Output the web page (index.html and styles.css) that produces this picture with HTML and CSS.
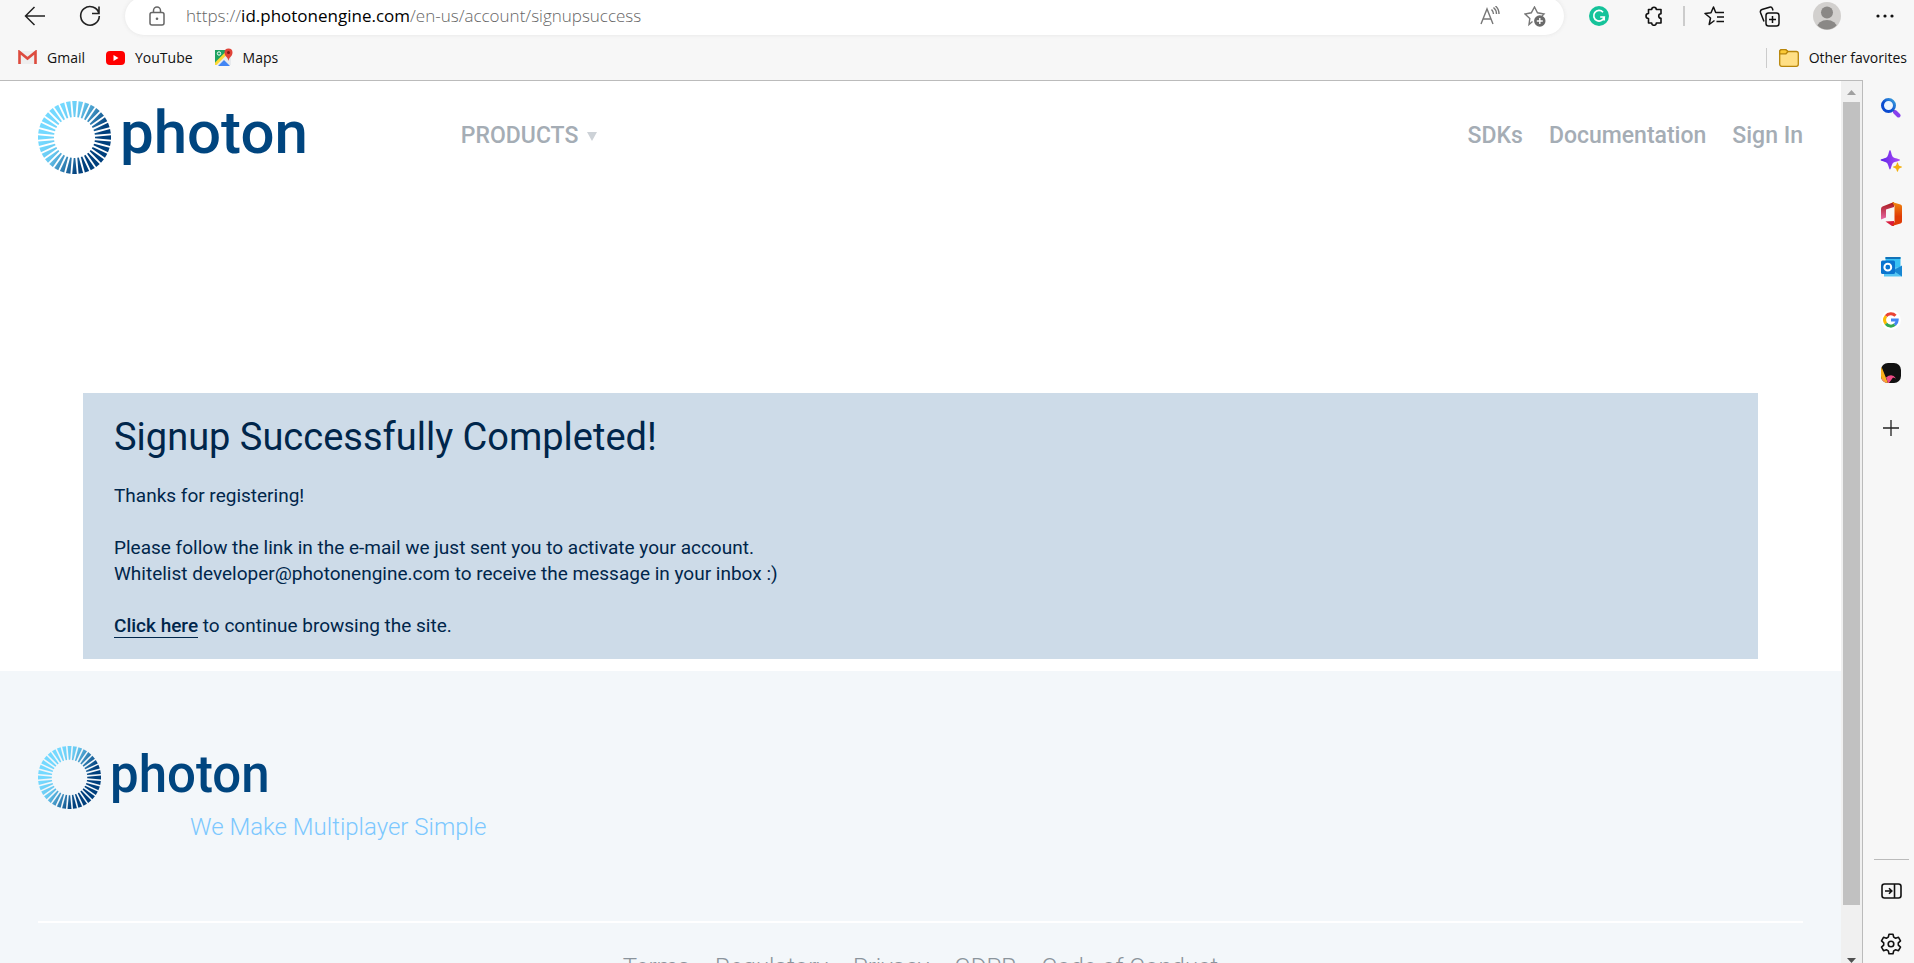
FILE: index.html
```html
<!DOCTYPE html>
<html lang="en">
<head>
<meta charset="utf-8">
<title>Signup Successfully Completed!</title>
<link rel="stylesheet" href="styles.css">
</head>
<body>
<svg class="defs" width="0" height="0" aria-hidden="true">
  <defs>
    <linearGradient id="ringFill" gradientUnits="userSpaceOnUse" x1="14" y1="24" x2="60" y2="52">
      <stop offset="0" stop-color="#74d9ff"/><stop offset=".3" stop-color="#68c8f0"/><stop offset=".85" stop-color="#003f7c"/><stop offset="1" stop-color="#003f7c"/>
    </linearGradient>
    <path id="ray" d="M34.200 0h4.600L37.300 16h-1.600z" fill="#fff"/>
    <g id="rays3"><use href="#ray"/><use href="#ray" transform="rotate(10 36.5 36.5)"/><use href="#ray" transform="rotate(20 36.5 36.5)"/></g>
    <g id="rays9"><use href="#rays3"/><use href="#rays3" transform="rotate(30 36.5 36.5)"/><use href="#rays3" transform="rotate(60 36.5 36.5)"/></g>
    <mask id="rays" maskUnits="userSpaceOnUse" x="0" y="0" width="73" height="73"><use href="#rays9"/><use href="#rays9" transform="rotate(90 36.5 36.5)"/><use href="#rays9" transform="rotate(180 36.5 36.5)"/><use href="#rays9" transform="rotate(270 36.5 36.5)"/></mask>
    <symbol id="ring" viewBox="0 0 73 73"><rect width="73" height="73" fill="url(#ringFill)" mask="url(#rays)"/></symbol>
  </defs>
</svg>
<div class="browser">
  <header class="chrome">
    <div class="toolbar">
      <button class="tool tool-nav" aria-label="Back"><svg width="22" height="20" viewBox="0 0 22 20" fill="none" stroke="#222" stroke-width="1.500"><path d="M21 10H1.500M10.500 1 1.500 10l9 9"/></svg></button>
      <button class="tool tool-nav" aria-label="Refresh"><svg width="22" height="22" viewBox="0 0 22 22" fill="none" stroke="#222" stroke-width="1.600"><path d="M20 8.500A9.300 9.300 0 1 0 20.300 11M20 1.500v7h-7"/></svg></button>
      <div class="address">
        <svg width="16" height="20" viewBox="0 0 16 20" fill="none" stroke="#666" stroke-width="1.500"><rect x="1" y="6.500" width="14" height="12.500" rx="2"/><path d="M4.500 6.500V4.500a3.500 3.500 0 0 1 7 0v2"/><circle cx="8" cy="12.800" r="1.300" fill="#666" stroke="none"/></svg>
        <a class="url" href="#">https://<span class="host">id.photonengine.com</span>/en-us/account/signupsuccess</a>
        <button class="pill-tool" aria-label="Read aloud"><svg width="20" height="20" viewBox="0 0 20 20" fill="none" stroke="#777" stroke-width="1.400"><path d="M1 18 7 3l6 15M3 13h8M11.500 3.500q2 2 2 4.500M13.500 1.500q3 2.500 3 6.500M15.500 0Q19 3 19 8"/></svg></button>
        <button class="pill-tool" aria-label="Add to favorites"><svg width="22" height="21" viewBox="0 0 22 21" fill="none" stroke="#777" stroke-width="1.400"><path d="M8.500 15.500 5 18.500l.8-6L1 8l6.300-1.200L10.500 1l3 5.800L20 8l-2 2"/><circle cx="15.800" cy="15" r="5.700" fill="#6a6a6a" stroke="none"/><path d="M15.800 12v6M12.800 15h6" stroke="#fff"/></svg></button>
      </div>
      <button class="tool" aria-label="Grammarly"><svg width="20" height="20" viewBox="0 0 20 20"><circle cx="10" cy="10" r="10" fill="#15c39a"/><path d="M14 6.200A5.300 5.300 0 1 0 15.200 11h-4M15.200 11v3.600" fill="none" stroke="#fff" stroke-width="1.700"/></svg></button>
      <button class="tool" aria-label="Extensions"><svg width="20" height="20" viewBox="0 0 20 20" fill="none" stroke="#111" stroke-width="1.600" stroke-linejoin="round"><path d="M4.500 3.500h3.200a2.300 2.300 0 0 1 4.600 0H17v4.200a2.300 2.300 0 0 0 0 4.600V17h-4.700a2.300 2.300 0 0 1-4.600 0H4.500v-4.500a2.500 2.500 0 1 1 0-5z"/></svg></button>
      <span class="tool-sep"></span>
      <button class="tool" aria-label="Favorites"><svg width="21" height="20" viewBox="0 0 21 20" fill="none" stroke="#111" stroke-width="1.500" stroke-linejoin="round"><path d="m10.500 14.500-5.300 4 1.300-6.500L1 7.500l6-.7L9.500 1l2.200 5.500H20M13 11h7M12.500 15.500H20"/></svg></button>
      <button class="tool" aria-label="Collections"><svg width="21" height="21" viewBox="0 0 21 21" fill="none" stroke="#111" stroke-width="1.500"><rect x="7" y="7" width="13" height="13" rx="2.500"/><path d="M13.500 10v7M10 13.500h7M5 15.500 1.500 6.500a2.500 2.500 0 0 1 1.500-3l7.500-2.300a2.500 2.500 0 0 1 3 1.500l.5 1.800"/></svg></button>
      <button class="tool tool-profile" aria-label="Profile"><svg width="28" height="28" viewBox="0 0 28 28"><clipPath id="face"><circle cx="14" cy="14" r="13.500"/></clipPath><circle cx="14" cy="14" r="14" fill="#d2d0ce"/><g fill="#8a8886" clip-path="url(#face)"><circle cx="14" cy="10.500" r="6"/><ellipse cx="14" cy="25.500" rx="10" ry="7.500"/></g></svg></button>
      <button class="tool" aria-label="Settings and more"><svg width="18" height="4" viewBox="0 0 18 4" fill="#111"><circle cx="2" cy="2" r="1.600"/><circle cx="9" cy="2" r="1.600"/><circle cx="16" cy="2" r="1.600"/></svg></button>
    </div>
    <nav class="bookmarks" aria-label="Bookmarks">
      <a href="#"><svg width="19" height="15" viewBox="0 0 19 15"><path d="M1 1h17v13H1z" fill="#eee"/><path d="M1.500 14V2l8 6.500 8-6.500v12" fill="none" stroke="#dd4b3e" stroke-width="2.600"/></svg>Gmail</a>
      <a href="#"><svg width="19" height="14" viewBox="0 0 19 14"><rect width="19" height="14" rx="4" fill="#f00"/><path d="m7.500 4 5 3-5 3z" fill="#fff"/></svg>YouTube</a>
      <a href="#"><svg width="19" height="19" viewBox="0 0 19 19"><path d="M1 2h16v15H1z" fill="#1da261"/><path d="M1 17 13 5l4 3v9z" fill="#e8eaed"/><path d="M1 14.500 12.500 3l2 2L2.500 17H1z" fill="#fdd835"/><path d="m4 18 6-6 6 6z" fill="#4285f4"/><circle cx="5" cy="5.500" r="1.700" fill="none" stroke="#fff"/><path d="M14.500 13c-.5-4-4-4.500-4-8.500a4 4 0 0 1 8 0c0 4-3.500 4.500-4 8.500z" fill="#e04338"/><circle cx="14.500" cy="4.500" r="1.500" fill="#801a14"/></svg>Maps</a>
      <a class="other" href="#"><svg width="20" height="18" viewBox="0 0 20 18" stroke="#b8860b" stroke-width="1.300"><path d="M.7 4V2.700a2 2 0 0 1 2-2h4L9 2.500h8.300a2 2 0 0 1 2 2v10.800a2 2 0 0 1-2 2H2.700a2 2 0 0 1-2-2z" fill="#ffdf85"/><path d="M.7 4.800V2.700a2 2 0 0 1 2-2h4L9 2.500 7 4.800z" fill="#fbc935"/></svg>Other favorites</a>
    </nav>
  </header>
  <div class="viewport">
    <div class="page">
      <header class="site-header">
        <a class="logo" href="#"><svg class="logo-ring" aria-hidden="true"><use href="#ring"/></svg><span class="logo-word">photon</span></a>
        <button class="products">PRODUCTS<svg width="10" height="9" viewBox="0 0 10 9"><path d="M0 0h10L5 9z" fill="#cdd2d7"/></svg></button>
        <nav class="site-nav" aria-label="Main"><a href="#">SDKs</a><a href="#">Documentation</a><a href="#">Sign In</a></nav>
      </header>
      <main class="message">
        <h1>Signup Successfully Completed!</h1>
        <p>Thanks for registering!</p>
        <p>Please follow the link in the e-mail we just sent you to activate your account.<br>Whitelist developer@photonengine.com to receive the message in your inbox :)</p>
        <p><a href="#">Click here</a> to continue browsing the site.</p>
      </main>
      <footer class="site-footer">
        <a class="logo logo-small" href="#"><svg class="logo-ring" aria-hidden="true"><use href="#ring"/></svg><span class="logo-word">photon</span></a>
        <p class="tagline">We Make Multiplayer Simple</p>
        <nav class="legal" aria-label="Legal"><a href="#">Terms</a><a href="#">Regulatory</a><a href="#">Privacy</a><a href="#">GDPR</a><a href="#">Code of Conduct</a></nav>
      </footer>
    </div>
    <div class="scrollbar" aria-hidden="true">
      <svg width="9" height="5" viewBox="0 0 9 5"><path d="M0 5h9L4.500 0z" fill="#a0a0a0"/></svg>
      <div class="thumb"></div>
      <svg width="9" height="5" viewBox="0 0 9 5"><path d="M0 0h9L4.500 5z" fill="#505050"/></svg>
    </div>
  </div>
  <aside class="sidebar" aria-label="Browser sidebar">
    <button aria-label="Search"><svg width="20" height="20" viewBox="0 0 20 20"><defs><linearGradient id="lens" x1="1" y1="0" x2="0" y2="1"><stop stop-color="#3aa0dc"/><stop offset=".6" stop-color="#0b4bd0"/></linearGradient></defs><path d="m11.500 11.500 2.500 2.500" stroke="#555" stroke-width="2"/><path d="m14 14 3.500 3.500" stroke="#8740ee" stroke-width="4" stroke-linecap="round"/><circle cx="7.500" cy="7.500" r="6" fill="#eef6ff" stroke="url(#lens)" stroke-width="3"/></svg></button>
    <button aria-label="Discover"><svg width="22" height="22" viewBox="0 0 22 22"><defs><linearGradient id="spark"><stop stop-color="#5b24e8"/><stop offset="1" stop-color="#b14cf5"/></linearGradient></defs><path d="M10 0c1 0 1.500 5.500 3 7s7 1.800 7 3-5.500 1.500-7 3-2 6.500-3 6.500S8.500 14.500 7 13 .5 11 .5 10 5.500 8.500 7 7s2-7 3-7z" fill="url(#spark)"/><path d="M17.500 12.500c.7 0 .8 2.300 1.500 3s3 .8 3 1.500-2.300 1-3 1.700-.8 3.100-1.500 3.100-.9-2.400-1.600-3.100-2.900-1-2.900-1.700 2.200-.8 2.900-1.500.9-3 1.600-3z" fill="#f4b010"/></svg></button>
    <button aria-label="Office"><svg width="21" height="24" viewBox="0 0 21 24"><defs><linearGradient id="offR" x1="0" y1="0" x2="0" y2="1"><stop stop-color="#f08a10"/><stop offset=".6" stop-color="#e03c06"/></linearGradient><linearGradient id="offL" x1="0" y1="0" x2="0" y2="1"><stop stop-color="#a51414"/><stop offset="1" stop-color="#e86aa8"/></linearGradient></defs><path d="M13 0 1.500 4.500Q0 5.300 0 7v10.500l5-2V7.500L13 5z" fill="url(#offL)"/><path d="m4.500 19.500 8.500-.5v5h-2z" fill="#d81b3c"/><path d="m11 0 8.500 2.500q1.500.5 1.500 2v15q0 1.500-1.500 2L11 24l2.500-4V4z" fill="url(#offR)"/></svg></button>
    <button aria-label="Outlook"><svg width="21" height="21" viewBox="0 0 21 21"><path d="M4.500 1h15v10h-15z" fill="#38c1f5"/><path d="M4.500 1h15v2h-15z" fill="#1272b8"/><path d="M3 20.500V11h18v9.500z" fill="#55c5f2"/><path d="m12 14.500 9-5v11z" fill="#1887d3"/><rect y="4.500" width="14" height="13.500" rx="1.500" fill="#0a74cf"/><circle cx="6.800" cy="11.200" r="3.400" fill="none" stroke="#fff" stroke-width="2"/></svg></button>
    <button aria-label="Google"><svg width="20" height="20" viewBox="0 0 20 20" fill="none" stroke-width="3"><circle cx="10" cy="10" r="10" fill="#fff"/><path d="M5 6.200A6.200 6.200 0 0 1 14.500 5.700" stroke="#ea4335"/><path d="M5 6.200a6.200 6.200 0 0 0 0 7.600" stroke="#fbbc05"/><path d="M5 13.800a6.200 6.200 0 0 0 8.800.9" stroke="#34a853"/><path d="M13.800 14.700q2.400-1.900 2.400-4.700H10" stroke="#4285f4"/></svg></button>
    <button aria-label="App"><svg width="20" height="20" viewBox="0 0 20 20"><clipPath id="app"><rect width="20" height="20" rx="7"/></clipPath><g clip-path="url(#app)"><path d="M0 0h20v20H0z" fill="#111"/><path d="M0 2.500 7 20H0z" fill="#f9b21c"/><path d="M5 14.500q6-5 10 1l-3-1-4 5.500H7z" fill="#ef4c86"/><path d="m1 15 5 5H0z" fill="#ff8a55"/></g></svg></button>
    <button class="side-add" aria-label="Add"><svg width="16" height="16" viewBox="0 0 16 16" stroke="#222" stroke-width="1.300"><path d="M8 0v16M0 8h16"/></svg></button>
    <span class="side-rule"></span>
    <button aria-label="Hide sidebar"><svg width="21" height="16" viewBox="0 0 21 16" fill="none" stroke="#111" stroke-width="1.600"><rect x="1" y="1" width="19" height="14" rx="2.500"/><path d="M13.500 1v14M4 8h6.500M8 5.200 10.800 8 8 10.800"/></svg></button>
    <button aria-label="Settings"><svg width="22" height="22" viewBox="0 0 22 22" fill="none" stroke="#111" stroke-width="1.600" stroke-linejoin="round"><circle cx="11" cy="11" r="2.800"/><path d="M9 1.200h4l.7 2.900 1.900 1.100 2.900-.9 2 3.500-2.200 2.100v2.200l2.200 2.100-2 3.500-2.900-.9-1.900 1.100-.7 2.900H9l-.7-2.900-1.900-1.100-2.900.9-2-3.500 2.200-2.100V9.900L1.500 7.800l2-3.500 2.900.9 1.900-1.100z"/></svg></button>
  </aside>
</div>
</body>
</html>
```
FILE: styles.css
```css
* { box-sizing: border-box; }
body { margin: 0; font-family: Roboto, "Liberation Sans", sans-serif; background: #f7f7f7; }
a { color: inherit; text-decoration: none; }
button { display: flex; align-items: center; justify-content: center; padding: 0; border: 0; background: none; font: inherit; color: inherit; }
svg { display: block; flex: none; }
.defs { position: absolute; }

.browser {
  display: grid;
  grid-template: auto minmax(0, 1fr) / minmax(0, 1fr) 51px;
  height: 100vh;
  overflow: hidden;
}

/* Browser toolbar */
.chrome { grid-column: 1 / -1; font-family: "Open Sans", "Noto Sans", sans-serif; color: #111; }
.toolbar { display: flex; align-items: center; height: 38px; margin-top: -3px; padding: 0 2px 0 7px; }
.tool { width: 55px; height: 32px; }
.tool-profile { width: 60px; }
.tool-sep { width: 2px; height: 20px; margin: 0 2px; background: #ccc; }
.address {
  display: flex; align-items: center; flex: 1; height: 38px;
  margin: 0 7px 0 8px; padding: 0 18px 0 24px;
  border-radius: 19px; background: #fff; box-shadow: 0 0 4px #e4e4e4;
}
.url { flex: 1; margin-left: 21px; font-size: 17px; line-height: 24px; font-weight: 300; color: #666; }
.host { color: #000; font-weight: 400; }
.pill-tool { width: 22px; height: 24px; margin-left: 23px; }

.bookmarks { display: flex; align-items: center; gap: 21px; height: 45px; padding: 0 7px 0 18px; font-size: 14px; line-height: 20px; }
.bookmarks a { display: flex; align-items: center; gap: 10px; }
.bookmarks .other { height: 20px; margin-left: auto; padding-left: 12px; border-left: 1px solid #ccc; }

/* Page area */
.viewport { display: flex; min-height: 0; border: solid #bbb; border-width: 1px 1px 0 0; background: #fff; }
.page { flex: 1; min-width: 0; overflow: hidden; }
.scrollbar { display: flex; flex-direction: column; align-items: center; width: 21px; padding-top: 9px; overflow: hidden; background: #f0f0f0; }
.thumb { width: 17px; flex: 0 0 92%; margin: 7px 0 53px; background: #c1c1c1; }

.site-header { display: flex; align-items: center; height: 112px; padding: 0 38px; font-size: 23px; font-weight: 500; line-height: 32px; color: #a5adb5; }
.logo { display: flex; align-items: center; gap: 9px; color: #00457f; font-weight: 500; font-size: 60px; line-height: 72px; }
.logo-ring { width: 73px; height: 73px; }
.logo-word { margin-top: -8px; }
.products { gap: 9px; margin: -2px 0 0 153px; }
.site-nav { display: flex; gap: 26px; margin: -2px 0 0 auto; }

.message { margin: 200px 83px 12px; padding: 24px 31px 20px; background: #cddbe8; color: #00264b; font-size: 19px; line-height: 26px; }
.message h1 { margin: 0 0 26px; font-size: 38px; font-weight: 400; line-height: 40px; }
.message p { margin: 0 0 26px; }
.message p:last-child { margin: 0; }
.message a { font-weight: 500; border-bottom: 1px solid #00264b; }

.site-footer { padding: 75px 38px 40px; background: #f3f7fa; }
.logo-small { font-size: 51px; line-height: 63px; gap: 9px; width: max-content; }
.logo-small .logo-ring { width: 63px; height: 63px; }
.logo-small .logo-word { margin-top: -6px; }
.tagline { margin: 2px 0 78px 152px; color: #7cc8ff; font-size: 24px; font-weight: 300; line-height: 32px; }
.legal { display: flex; justify-content: center; gap: 25px; padding-top: 28px; border-top: 2px solid #fff; color: #8b949c; font-size: 24px; font-weight: 300; line-height: 32px; }

/* Right sidebar */
.sidebar { display: flex; flex-direction: column; padding: 1px 0 0 5px; margin-bottom: -7px; }
.sidebar button { flex: none; height: 53px; }
.sidebar .side-add { margin-top: 2px; }
.side-rule { height: 1px; margin: auto 5px 4px 6px; background: #bbb; }
```
